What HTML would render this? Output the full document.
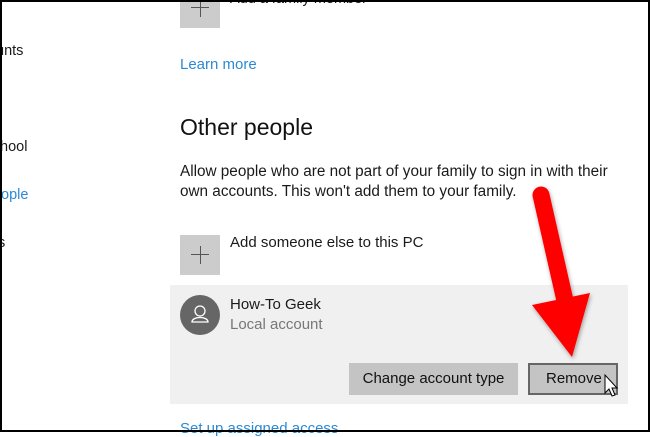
<!DOCTYPE html>
<html><head><meta charset="utf-8"><style>
*{margin:0;padding:0;box-sizing:border-box}
body{width:650px;height:432px;overflow:hidden;background:#fff;font-family:"Liberation Sans",sans-serif;color:#1a1a1a;position:relative}
.frame{position:absolute;left:0;top:0;width:650px;height:432px;border:2px solid #000;pointer-events:none;z-index:10}
.t{position:absolute;white-space:nowrap}
.box{position:absolute;background:#ccc}
.plus{position:absolute;left:11px;top:19px;width:18px;height:1px;background:#555}
.plusv{position:absolute;left:19.5px;top:11px;width:1px;height:18px;background:#555}
.btn{position:absolute;background:#c4c4c4;font-size:15px;text-align:center;line-height:31px;color:#111}
</style></head><body>
<div class="t" style="left:-4px;top:43px;font-size:14.5px">unts</div>
<div class="t" style="left:0px;top:139px;font-size:14.5px">hool</div>
<div class="t" style="left:1px;top:187px;font-size:14.5px;color:#2a8ad4">ople</div>
<div class="t" style="left:-2px;top:235px;font-size:14.5px">s</div>

<div class="box" style="left:180px;top:-12px;width:40px;height:40px"><div class="plus"></div><div class="plusv"></div></div>
<div class="t" style="left:230px;top:-9px;font-size:14.5px">Add a family member</div>
<div class="t" style="left:180px;top:56px;font-size:15px;color:#2a8ad4">Learn more</div>
<div class="t" style="left:180px;top:114px;font-size:23px;color:#111">Other people</div>
<div class="t" style="left:180px;top:162px;font-size:15.3px;line-height:20px">Allow people who are not part of your family to sign in with their<br>own accounts. This won't add them to your family.</div>

<div class="box" style="left:180px;top:235px;width:40px;height:40px"><div class="plus"></div><div class="plusv"></div></div>
<div class="t" style="left:230px;top:234px;font-size:15px">Add someone else to this PC</div>

<div style="position:absolute;left:170px;top:285px;width:458px;height:119px;background:#f0f0f0"></div>
<div style="position:absolute;left:180px;top:295px;width:40px;height:40px;border-radius:50%;background:#666"></div>
<svg style="position:absolute;left:180px;top:295px" width="40" height="40"><circle cx="20" cy="16" r="5" fill="none" stroke="#fff" stroke-width="1.3"/><path d="M12 27 C12 21 28 21 28 27 Z" fill="none" stroke="#fff" stroke-width="1.3"/></svg>
<div class="t" style="left:230px;top:296px;font-size:15px">How-To Geek</div>
<div class="t" style="left:230px;top:316px;font-size:15px;color:#777">Local account</div>
<div class="btn" style="left:349px;top:363px;width:169px;height:32px">Change account type</div>
<div class="btn" style="left:528px;top:363px;width:90px;height:32px;border:2px solid #666;line-height:28px;text-align:left;padding-left:16px">Remove</div>

<div class="t" style="left:180px;top:420px;font-size:15px;color:#2a8ad4">Set up assigned access</div>

<svg style="position:absolute;left:0;top:0" width="650" height="432">
<defs><filter id="s" x="-20%" y="-20%" width="140%" height="140%"><feDropShadow dx="1" dy="2" stdDeviation="2" flood-color="#000" flood-opacity="0.35"/></filter></defs>
<g filter="url(#s)" fill="#f00">
<path d="M541 195 L566 305" stroke="#f00" stroke-width="17" stroke-linecap="round"/>
<path d="M532 305 L590 293 L572 357 Z"/>
</g>
<path d="M605 375 L605 393 L609 389 L612 396 L615 395 L612 388 L617 388 Z" fill="#fff" stroke="#000" stroke-width="1"/>
</svg>
<div class="frame"></div>
</body></html>
